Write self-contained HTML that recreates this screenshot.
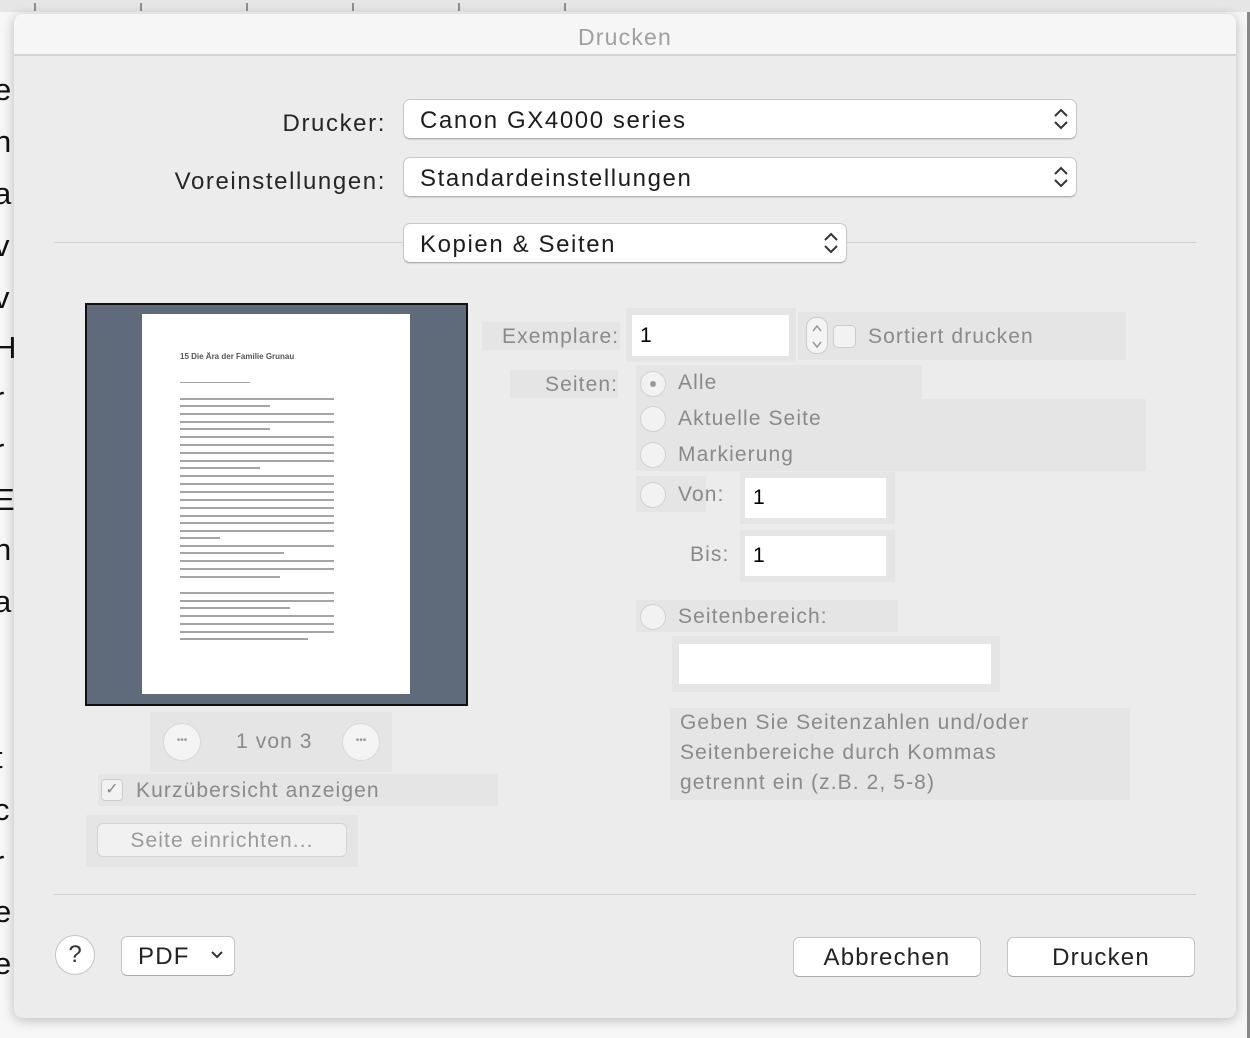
<!DOCTYPE html>
<html><head><meta charset="utf-8"><style>
*{margin:0;padding:0;box-sizing:border-box}
body{width:1250px;height:1038px;position:relative;overflow:hidden;background:#f7f7f7;font-family:"Liberation Sans",sans-serif}
.a{position:absolute}
.topstrip{left:0;top:0;width:1250px;height:12px;background:#e6e6e6}
.tick{top:3px;width:2px;height:8px;background:#8a9099}
.lt{font-size:31px;color:#111;left:-6px}
.dlg{left:14px;top:14px;width:1222px;height:1004px;background:#ececec;border-radius:9px;box-shadow:0 2px 12px rgba(0,0,0,.25);overflow:hidden}
.title{left:0;top:0;width:1222px;height:42px;background:#f6f6f6;border-bottom:2px solid #d4d4d4;text-align:center;font-size:23px;line-height:46px;color:#a0a0a0;letter-spacing:1.2px}
.lab{font-size:24px;color:#262626;text-align:right;letter-spacing:1.6px}
.pop{background:#fff;border:1px solid #c8c8c8;border-bottom-color:#b0b0b0;border-radius:7px;font-size:24px;color:#1d1d1d;padding-left:16px;line-height:42px;letter-spacing:1.6px;box-shadow:0 1px 1px rgba(0,0,0,.1)}
.g{font-size:21px;color:#8a8a8a;letter-spacing:1.1px}
.hl{background:#e5e5e5}
.field{background:#fff;font-size:21px;color:#000;padding-left:8px}
.radio{width:26px;height:26px;border-radius:50%;border:1px solid #d2d2d2;background:#f2f2f2}
.btn{background:#fff;border:1px solid #c4c4c4;border-bottom-color:#aaa;border-radius:6px;font-size:24px;color:#222;text-align:center;line-height:40px;letter-spacing:1.2px}
.sep{height:2px;background:#d6d6d6}
.bar{position:absolute;height:2px;background:#a4a4a4;left:180px}
</style></head><body>
<div class="a topstrip"></div>
<div class="a tick" style="left:34px"></div><div class="a tick" style="left:140px"></div><div class="a tick" style="left:246px"></div><div class="a tick" style="left:352px"></div><div class="a tick" style="left:458px"></div><div class="a tick" style="left:564px"></div>
<div class="a" style="left:1247px;top:12px;width:3px;height:1026px;background:#888"></div>
<div class="a lt" style="top:72px">e</div><div class="a lt" style="top:124px">h</div><div class="a lt" style="top:176px">a</div><div class="a lt" style="top:228px">v</div><div class="a lt" style="top:280px">v</div><div class="a lt" style="top:330px">H</div><div class="a lt" style="top:380px">r</div><div class="a lt" style="top:432px">r</div><div class="a lt" style="top:482px">E</div><div class="a lt" style="top:532px">h</div><div class="a lt" style="top:584px">a</div><div class="a lt" style="top:740px">t</div><div class="a lt" style="top:792px">c</div><div class="a lt" style="top:844px">r</div><div class="a lt" style="top:894px">e</div><div class="a lt" style="top:946px">e</div>
<div class="a dlg">
<div class="a title">Drucken</div>
</div>
<div class="a lab" style="left:120px;top:110px;width:266px">Drucker:</div>
<div class="a lab" style="left:120px;top:168px;width:266px">Voreinstellungen:</div>
<div class="a pop" style="left:403px;top:99px;width:674px;height:40px">Canon GX4000 series</div>
<div class="a pop" style="left:403px;top:157px;width:674px;height:40px">Standardeinstellungen</div>
<div class="a sep" style="left:54px;top:242px;width:1142px;height:1px;background:#d0d0d0"></div>
<div class="a pop" style="left:403px;top:223px;width:444px;height:40px">Kopien &amp; Seiten</div>
<svg class="a" style="left:1052px;top:106px" width="18" height="26"><path d="M3 10 L9 4 L15 10 M3 16 L9 22 L15 16" stroke="#333" stroke-width="2" fill="none"/></svg>
<svg class="a" style="left:1052px;top:164px" width="18" height="26"><path d="M3 10 L9 4 L15 10 M3 16 L9 22 L15 16" stroke="#333" stroke-width="2" fill="none"/></svg>
<svg class="a" style="left:822px;top:230px" width="18" height="26"><path d="M3 10 L9 4 L15 10 M3 16 L9 22 L15 16" stroke="#333" stroke-width="2" fill="none"/></svg>

<div class="a" style="left:85px;top:303px;width:383px;height:403px;background:#5f6b7a;border:2px solid #111"></div>
<div class="a" style="left:142px;top:314px;width:268px;height:380px;background:#fff"></div>
<div class="a" style="left:180px;top:352px;font-size:8px;font-weight:bold;color:#555">15 Die Ära der Familie Grunau</div>
<div class="bar" style="top:382px;width:70px;height:1px"></div>
<div class="bar" style="top:398px;width:154px"></div><div class="bar" style="top:405px;width:90px"></div><div class="bar" style="top:413px;width:154px"></div><div class="bar" style="top:421px;width:154px"></div><div class="bar" style="top:428px;width:90px"></div><div class="bar" style="top:436px;width:154px"></div><div class="bar" style="top:444px;width:154px"></div><div class="bar" style="top:452px;width:154px"></div><div class="bar" style="top:460px;width:154px"></div><div class="bar" style="top:467px;width:80px"></div><div class="bar" style="top:475px;width:154px"></div><div class="bar" style="top:483px;width:154px"></div><div class="bar" style="top:491px;width:154px"></div><div class="bar" style="top:499px;width:154px"></div><div class="bar" style="top:507px;width:154px"></div><div class="bar" style="top:515px;width:154px"></div><div class="bar" style="top:522px;width:154px"></div><div class="bar" style="top:530px;width:154px"></div><div class="bar" style="top:537px;width:40px"></div><div class="bar" style="top:545px;width:154px"></div><div class="bar" style="top:552px;width:104px"></div><div class="bar" style="top:560px;width:154px"></div><div class="bar" style="top:568px;width:154px"></div><div class="bar" style="top:576px;width:100px"></div><div class="bar" style="top:592px;width:154px"></div><div class="bar" style="top:600px;width:154px"></div><div class="bar" style="top:607px;width:110px"></div><div class="bar" style="top:615px;width:154px"></div><div class="bar" style="top:623px;width:154px"></div><div class="bar" style="top:631px;width:154px"></div><div class="bar" style="top:638px;width:128px"></div>

<div class="a hl" style="left:150px;top:712px;width:242px;height:60px"></div>
<div class="a" style="left:163px;top:723px;width:38px;height:38px;border-radius:50%;background:#f4f4f4;border:1px solid #d8d8d8;text-align:center;line-height:34px;font-size:10px;color:#999">•••</div>
<div class="a" style="left:342px;top:723px;width:38px;height:38px;border-radius:50%;background:#f4f4f4;border:1px solid #d8d8d8;text-align:center;line-height:34px;font-size:10px;color:#999">•••</div>
<div class="a g" style="left:236px;top:730px">1 von 3</div>
<div class="a hl" style="left:98px;top:774px;width:400px;height:32px"></div>
<div class="a" style="left:101px;top:779px;width:22px;height:22px;border:1px solid #ccc;border-radius:4px;background:#f2f2f2;font-size:16px;color:#888;text-align:center;line-height:20px">✓</div>
<div class="a g" style="left:136px;top:779px">Kurzübersicht anzeigen</div>
<div class="a hl" style="left:86px;top:815px;width:272px;height:52px"></div>
<div class="a" style="left:97px;top:823px;width:250px;height:34px;border:1px solid #d4d4d4;border-radius:6px;background:#f1f1f1;text-align:center;line-height:34px;font-size:21px;color:#9a9a9a;letter-spacing:1.1px">Seite einrichten...</div>

<div class="a hl" style="left:482px;top:322px;width:138px;height:28px"></div>
<div class="a g" style="left:502px;top:325px">Exemplare:</div>
<div class="a hl" style="left:626px;top:308px;width:170px;height:54px"></div>
<div class="a field" style="left:632px;top:315px;width:157px;height:41px;line-height:41px">1</div>
<div class="a hl" style="left:798px;top:312px;width:328px;height:48px"></div>
<div class="a" style="left:806px;top:317px;width:22px;height:37px;border:1px solid #ccc;border-radius:10px;background:#f4f4f4"></div>
<svg class="a" style="left:809px;top:320px" width="16" height="32"><path d="M4 11 L8 6 L12 11 M4 22 L8 27 L12 22" stroke="#999" stroke-width="1.5" fill="none"/></svg>
<div class="a" style="left:833px;top:325px;width:23px;height:23px;border:1px solid #ccc;border-radius:5px;background:#f2f2f2"></div>
<div class="a g" style="left:868px;top:325px">Sortiert drucken</div>

<div class="a hl" style="left:510px;top:370px;width:108px;height:28px"></div>
<div class="a g" style="left:545px;top:373px">Seiten:</div>
<div class="a hl" style="left:636px;top:365px;width:286px;height:34px"></div>
<div class="a hl" style="left:636px;top:399px;width:510px;height:72px"></div>
<div class="a hl" style="left:636px;top:476px;width:70px;height:36px"></div>
<div class="a hl" style="left:636px;top:600px;width:262px;height:32px"></div>
<div class="a radio" style="left:640px;top:371px"></div>
<div class="a" style="left:650px;top:381px;width:6px;height:6px;border-radius:50%;background:#999"></div>
<div class="a radio" style="left:640px;top:406px"></div>
<div class="a radio" style="left:640px;top:442px"></div>
<div class="a radio" style="left:640px;top:482px"></div>
<div class="a radio" style="left:640px;top:604px"></div>
<div class="a g" style="left:678px;top:371px">Alle</div>
<div class="a g" style="left:678px;top:407px">Aktuelle Seite</div>
<div class="a g" style="left:678px;top:443px">Markierung</div>
<div class="a g" style="left:678px;top:483px">Von:</div>
<div class="a g" style="left:690px;top:543px">Bis:</div>
<div class="a g" style="left:678px;top:605px">Seitenbereich:</div>
<div class="a hl" style="left:740px;top:472px;width:155px;height:52px"></div>
<div class="a hl" style="left:740px;top:530px;width:155px;height:52px"></div>
<div class="a field" style="left:745px;top:478px;width:141px;height:40px;line-height:40px">1</div>
<div class="a field" style="left:745px;top:536px;width:141px;height:40px;line-height:40px">1</div>
<div class="a hl" style="left:672px;top:636px;width:328px;height:56px"></div>
<div class="a" style="left:679px;top:644px;width:312px;height:40px;background:#fff"></div>
<div class="a hl" style="left:670px;top:708px;width:460px;height:92px"></div>
<div class="a g" style="left:680px;top:708px;line-height:30px">Geben Sie Seitenzahlen und/oder<br>Seitenbereiche durch Kommas<br>getrennt ein (z.B. 2, 5-8)</div>

<div class="a sep" style="left:54px;top:894px;width:1142px;height:1px;background:#d0d0d0"></div>
<div class="a" style="left:55px;top:935px;width:40px;height:40px;border-radius:50%;background:#fff;border:1px solid #c4c4c4;text-align:center;line-height:38px;font-size:24px;color:#333">?</div>
<div class="a btn" style="left:121px;top:936px;width:114px;height:40px;text-align:left;padding-left:16px">PDF</div>
<svg class="a" style="left:210px;top:950px" width="14" height="10"><path d="M2 2 L7 7 L12 2" stroke="#333" stroke-width="2" fill="none"/></svg>
<div class="a btn" style="left:793px;top:937px;width:188px;height:40px">Abbrechen</div>
<div class="a btn" style="left:1007px;top:937px;width:188px;height:40px">Drucken</div>
</body></html>
